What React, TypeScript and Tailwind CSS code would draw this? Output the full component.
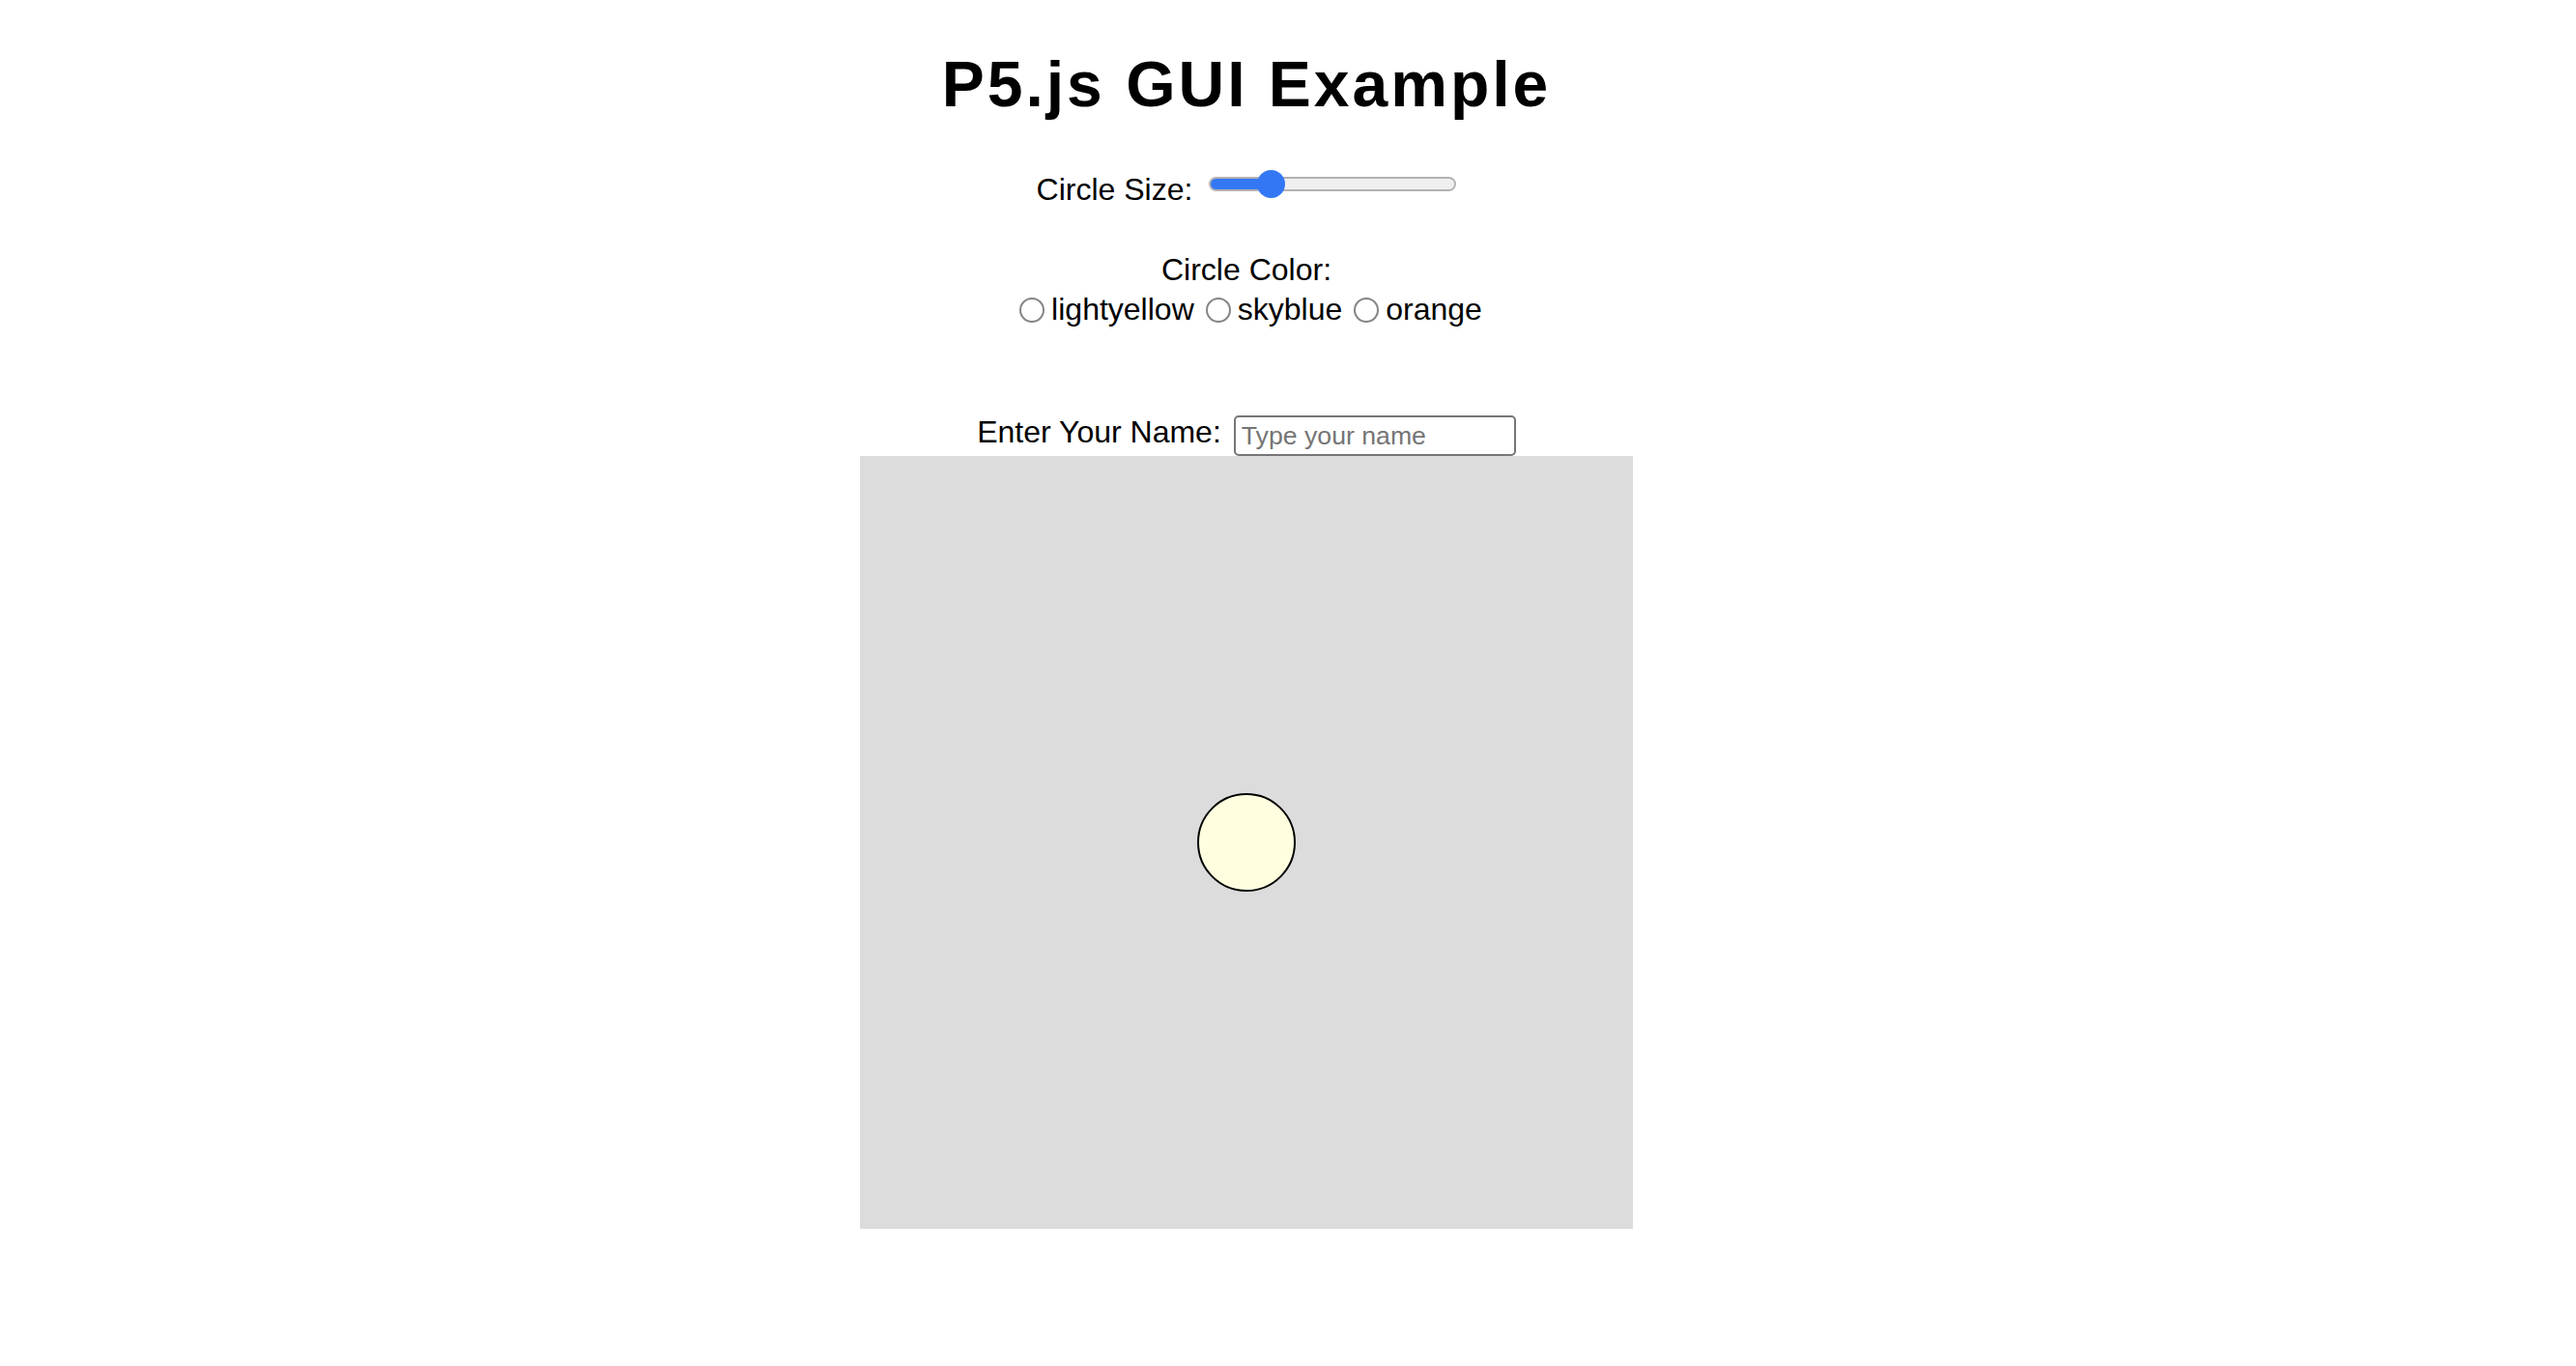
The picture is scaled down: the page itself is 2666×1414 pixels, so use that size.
import React from 'react';

// p5.js style gui page: title, slider, radio group, name input and a canvas

const colors = ['lightyellow', 'skyblue', 'orange'];

function Slider({ value }: { value: number }) {
  // value is 0..1, the thumb sits on the track
  const width = 256;
  const thumb = 29;
  const x = thumb / 2 + value * (width - thumb);
  return (
    <div className="relative w-[256px] h-[29px] flex items-center">
      <div className="relative w-full h-[15px] rounded-full border-2 border-[#b2b2b2] bg-[#efefef] overflow-hidden">
        <div
          className="absolute -left-[2px] -top-[2px] h-[15px] rounded-l-full bg-[#3377f5] border-2 border-[#4a6fae]"
          style={{ width: x }}
        />
      </div>
      <div
        className="absolute top-0 w-[29px] h-[29px] rounded-full bg-[#3377f5]"
        style={{ left: x - thumb / 2 }}
      />
    </div>
  );
}

export default function App() {
  return (
    <div className="w-[2580px] min-h-[1414px] bg-white text-black font-['Liberation_Sans',Arial,sans-serif] flex flex-col items-center">
      <h1 className="mt-[54px] h-[66px] text-[66px] leading-none font-bold tracking-[3px] whitespace-nowrap">
        P5.js GUI Example
      </h1>

      <div className="mt-[55px] flex items-start gap-[17px] h-[37px]">
        <div className="mt-[5px] text-[32px] leading-none whitespace-nowrap">Circle Size:</div>
        <div className="mt-[1px]">
          <Slider value={0.22} />
        </div>
      </div>

      <div className="mt-[51px] text-[32px] leading-none h-[32px] whitespace-nowrap">Circle Color:</div>

      <div className="mt-[9px] flex items-start h-[32px] text-[32px] leading-none whitespace-nowrap ml-[9px]">
        {colors.map((c, i) => (
          <div key={c} className={i > 0 ? 'flex items-start ml-[12px]' : 'flex items-start'}>
            <div className="mt-[4px] w-[26px] h-[26px] rounded-full border-2 border-[#858585] bg-white" />
            <div className="ml-[7px]">{c}</div>
          </div>
        ))}
      </div>

      <div className="mt-[94px] flex items-start gap-[13px] h-[42px]">
        <div className="mt-[1px] text-[32px] leading-none whitespace-nowrap">Enter Your Name:</div>
        <input
          type="text"
          placeholder="Type your name"
          className="w-[292px] h-[42px] border-2 border-[#767676] rounded-[5px] px-[6px] text-[26.67px] font-['Liberation_Sans',Arial,sans-serif] text-black placeholder:text-[#757575] outline-none bg-white"
        />
      </div>

      <div className="w-[800px] h-[800px] bg-[#dcdcdc] flex items-center justify-center">
        <div className="w-[102px] h-[102px] rounded-full border-2 border-black bg-[#ffffe0]" />
      </div>
    </div>
  );
}
